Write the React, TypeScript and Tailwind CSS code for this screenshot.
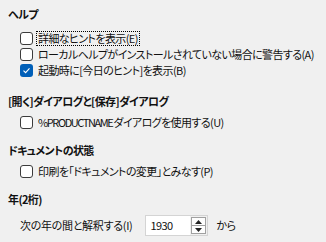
import { useState, type ReactNode } from "react";

function Check({ label, checked, focus }: { label: ReactNode; checked?: boolean; focus?: boolean }) {
  const [on, setOn] = useState(!!checked);
  return (
    <label className="flex h-4 items-center gap-[3px] whitespace-nowrap pl-[20px]" onClick={() => setOn(!on)}>
      {on ? (
        <span className="flex h-[13px] w-[13px] shrink-0 items-center justify-center rounded-[3px] bg-[#005fb8]">
          <svg width="9" height="9" viewBox="0 0 9 9">
            <path d="M1.5 4.6 L3.6 6.6 L7.5 2.4" fill="none" stroke="#fff" strokeWidth="1.1" />
          </svg>
        </span>
      ) : (
        <span className="h-[13px] w-[13px] shrink-0 rounded-[3px] border border-[#3c3c3c] bg-white" />
      )}
      <span className={focus ? "border border-dotted border-black px-[1px] leading-[13px]" : "px-[2px] leading-[14px]"}>
        {label}
      </span>
    </label>
  );
}

function Heading({ children }: { children: string }) {
  return <div className="h-[16px] whitespace-nowrap pl-[8px] font-bold leading-[16px]">{children}</div>;
}

export default function App() {
  return (
    <div className="h-[242px] w-[326px] overflow-hidden bg-[#f0f0f0] pt-[6px] text-[11px] tracking-[-0.6px] text-[#111] [font-family:'Noto_Sans_CJK_JP',sans-serif] [font-feature-settings:'palt']">
      <Heading>ヘルプ</Heading>
      <div className="mt-[8px] flex flex-col">
        <Check label="詳細なヒントを表示(E)" focus />
        <Check label="ローカルヘルプがインストールされていない場合に警告する(A)" />
        <Check label="起動時に[今日のヒント]を表示(B)" checked />
      </div>
      <div className="mt-[15px]">
        <Heading>[開く]ダイアログと[保存]ダイアログ</Heading>
      </div>
      <div className="mt-[5px]">
        <Check
          label={
            <>
              <span className="tracking-[-1.4px]">%PRODUCTNAME</span>
              <span className="ml-[1px]">ダイアログを使用する(U)</span>
            </>
          }
        />
      </div>
      <div className="mt-[12px]">
        <Heading>ドキュメントの状態</Heading>
      </div>
      <div className="mt-[5px]">
        <Check label="印刷を「ドキュメントの変更」とみなす(P)" />
      </div>
      <div className="mt-[12px]">
        <Heading>年(2桁)</Heading>
      </div>
      <div className="mt-[8px] flex items-center whitespace-nowrap pl-[20px]">
        <span className="tracking-[-0.3px]">次の年の間と解釈する(I)</span>
        <div className="ml-[13px] flex h-[21px] w-[63px] items-stretch border border-[#d4d4d4] bg-white">
          <span className="flex flex-1 items-center pl-[4px]">1930</span>
          <div className="flex w-[17px] flex-col bg-[#f0f0f0] p-[1px]">
            <div className="flex flex-1 items-center justify-center border border-[#a0a0a0] bg-[#fdfdfd]">
              <svg width="7" height="4" viewBox="0 0 7 4"><path d="M0 4 L3.5 0 L7 4Z" fill="#222" /></svg>
            </div>
            <div className="flex flex-1 items-center justify-center border border-t-0 border-[#a0a0a0] bg-[#fdfdfd]">
              <svg width="7" height="4" viewBox="0 0 7 4"><path d="M0 0 L3.5 4 L7 0Z" fill="#222" /></svg>
            </div>
          </div>
        </div>
        <span className="ml-[8px]">から</span>
      </div>
    </div>
  );
}
